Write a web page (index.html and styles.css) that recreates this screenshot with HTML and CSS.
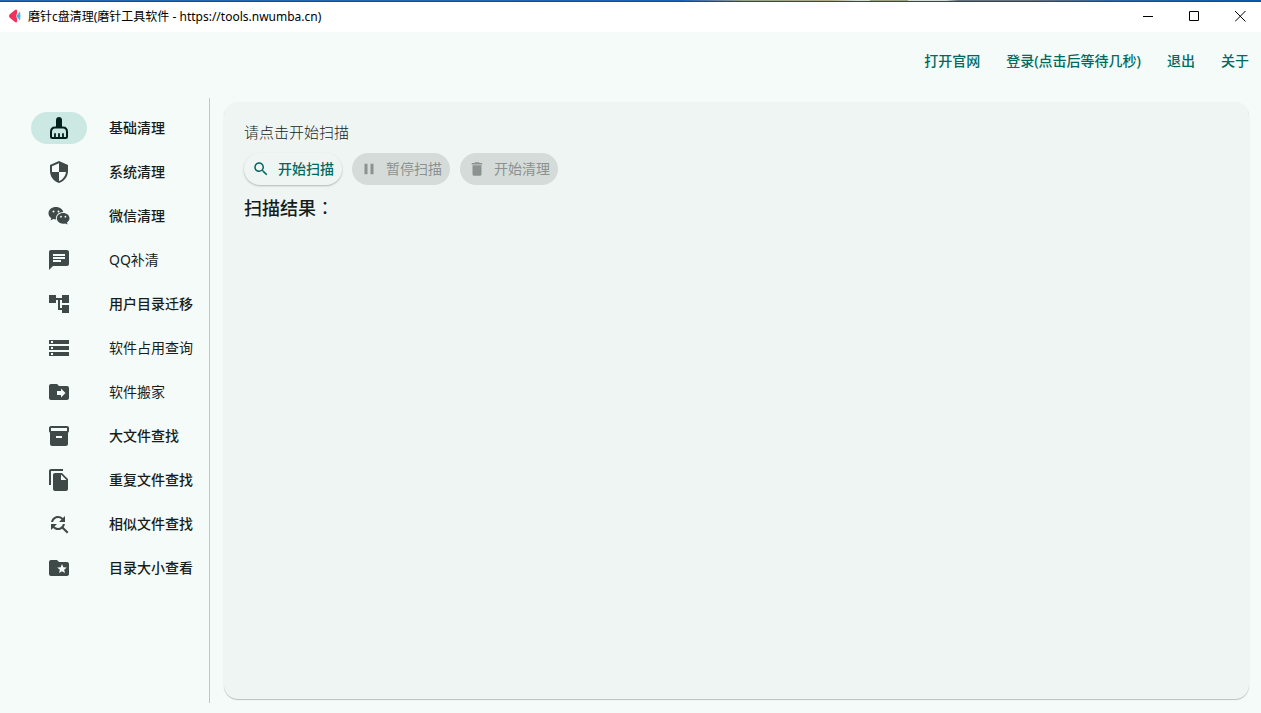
FILE: index.html
```html
<!DOCTYPE html>
<html lang="zh-CN">
<head>
<meta charset="utf-8">
<meta name="viewport" content="width=device-width, initial-scale=1">
<title>磨针c盘清理</title>
<link rel="stylesheet" href="styles.css">
</head>
<body>
<div class="desktop-strip"></div>
<header class="titlebar">
  <svg class="app-logo" viewBox="0 0 12 14"><path fill="#45b5e0" d="M7 7l4-4.500q1 4.500 0 9z"/><path fill="#f0305f" d="M0 7q0-1 1-2l5-4q1.500-1 2 .5v3L7 7l1 2.500v3q-.5 1.500-2 .5L1 9Q0 8 0 7z"/></svg>
  <h1 class="app-title">磨针c盘清理(磨针工具软件 - https://tools.nwumba.cn)</h1>
  <div class="window-controls">
    <button class="window-button" aria-label="最小化"><svg viewBox="0 0 11 11"><path d="M0 5.500h10"/></svg></button>
    <button class="window-button" aria-label="最大化"><svg viewBox="0 0 11 11"><path d="M.5.5h9v9h-9z"/></svg></button>
    <button class="window-button" aria-label="关闭"><svg viewBox="0 0 11 11"><path d="M0 0l10.500 10.500M10.500 0L0 10.500"/></svg></button>
  </div>
</header>
<nav class="top-links">
  <a href="#site">打开官网</a>
  <a href="#login">登录(点击后等待几秒)</a>
  <a href="#logout">退出</a>
  <a href="#about">关于</a>
</nav>
<div class="workspace">
  <nav class="sidebar">
    <a class="nav-item active" href="#basic"><span class="nav-icon"><svg viewBox="0 0 24 24"><path d="M9 11V4c0-4 6-4 6 0v7z"/><path fill="none" stroke="currentColor" stroke-width="2" stroke-linejoin="round" d="M8 11.500h8c2.500 0 4 2 4 4.500v4.500q0 1.500-1.500 1.500h-13Q4 22 4 20.500V16c0-2.500 1.500-4.500 4-4.500z"/><path fill="none" stroke="currentColor" stroke-width="1.800" stroke-linecap="round" d="M8 21v-3M12 21v-3M16 21v-3"/></svg></span>基础清理</a>
    <a class="nav-item" href="#system"><span class="nav-icon"><svg viewBox="0 0 24 24"><path d="M12 1L3 5v6c0 5.550 3.840 10.740 9 12 5.160-1.260 9-6.450 9-12V5l-9-4zm0 10.990h7c-.53 4.120-3.280 7.790-7 8.940V12H5V6.300l7-3.110v8.800z"/></svg></span>系统清理</a>
    <a class="nav-item" href="#wechat"><span class="nav-icon"><svg viewBox="0 0 24 24"><path fill-rule="evenodd" d="M9 3C4.700 3 1.500 5.700 1.500 9.200c0 2 1 3.800 2.800 5L3.600 16.500l2.700-1.400c.9.300 1.800.4 2.700.4-.8-3.800 2.500-7.500 7.300-7.400C15.700 5.200 12.700 3 9 3zM6.500 6.400a1 1 0 110 2 1 1 0 010-2zm5 0a1 1 0 110 2 1 1 0 010-2z"/><path fill-rule="evenodd" d="M16.200 9c-3.700 0-6.400 2.300-6.400 5.300s2.700 5.400 6.400 5.400c.8 0 1.500-.1 2.200-.3l2.200 1.200-.6-2.100c1.600-1.100 2.500-2.500 2.500-4.200 0-3-2.700-5.300-6.300-5.300zm-2.200 2.800a.9.9 0 110 1.800.9.9 0 010-1.800zm4.400 0a.9.9 0 110 1.800.9.900 0 010-1.800z"/></svg></span>微信清理</a>
    <a class="nav-item thin" href="#qq"><span class="nav-icon"><svg viewBox="0 0 24 24"><path d="M20 2H4c-1.100 0-2 .9-2 2v18l4-4h14c1.100 0 2-.9 2-2V4c0-1.100-.9-2-2-2zM6 9h12v2H6V9zm8 5H6v-2h8v2zm4-6H6V6h12v2z"/></svg></span>QQ补清</a>
    <a class="nav-item" href="#migrate"><span class="nav-icon"><svg viewBox="0 0 24 24"><path d="M22 11V3h-7v3H9V3H2v8h7V8h2v10h4v3h7v-8h-7v3h-2V8h2v3z"/></svg></span>用户目录迁移</a>
    <a class="nav-item thin" href="#usage"><span class="nav-icon"><svg viewBox="0 0 24 24"><path d="M2 20h20v-4H2v4zm2-3h2v2H4v-2zM2 4v4h20V4H2zm4 3H4V5h2v2zm-4 7h20v-4H2v4zm2-3h2v2H4v-2z"/></svg></span>软件占用查询</a>
    <a class="nav-item thin" href="#move"><span class="nav-icon"><svg viewBox="0 0 24 24"><path d="M20 6h-8l-2-2H4c-1.100 0-2 .9-2 2v12c0 1.100.9 2 2 2h16c1.100 0 2-.9 2-2V8c0-1.100-.9-2-2-2zm-6 11.500v-2.500h-4v-4h4V8.500l4.500 4.500-4.500 4.500z"/></svg></span>软件搬家</a>
    <a class="nav-item" href="#large"><span class="nav-icon"><svg viewBox="0 0 24 24"><path d="M20 2H4c-1 0-2 .9-2 2v3.010c0 .72.43 1.340 1 1.690V20c0 1.100 1.100 2 2 2h14c.9 0 2-.9 2-2V8.700c.57-.35 1-.97 1-1.690V4c0-1.100-1-2-2-2zm-5 12H9v-2h6v2zm5-7H4V4h16v3z"/></svg></span>大文件查找</a>
    <a class="nav-item" href="#duplicate"><span class="nav-icon"><svg viewBox="0 0 24 24"><path d="M16 1H4c-1.100 0-2 .9-2 2v14h2V3h12V1zm-1 4l6 6v10c0 1.100-.9 2-2 2H8c-1.100 0-2-.9-2-2V7c0-1.100.9-2 2-2h7zm-1 7h5.500L14 6.500V12z"/></svg></span>重复文件查找</a>
    <a class="nav-item" href="#similar"><span class="nav-icon"><svg viewBox="0 0 24 24"><path d="M11 6c1.380 0 2.630.56 3.540 1.460L12 10h6V4l-2.050 2.050C14.680 4.780 12.930 4 11 4c-3.530 0-6.430 2.610-6.920 6H6.100c.46-2.280 2.480-4 4.900-4zm5.640 9.140c.66-.9 1.120-1.970 1.280-3.140H15.900c-.46 2.280-2.480 4-4.900 4-1.380 0-2.630-.56-3.540-1.460L10 12H4v6l2.050-2.050C7.320 17.220 9.070 18 11 18c1.550 0 2.980-.51 4.140-1.360L20 21.490 21.490 20l-4.850-4.860z"/></svg></span>相似文件查找</a>
    <a class="nav-item" href="#size"><span class="nav-icon"><svg viewBox="0 0 24 24"><path d="M20 6h-8l-2-2H4c-1.100 0-2 .9-2 2v12c0 1.100.9 2 2 2h16c1.100 0 2-.9 2-2V8c0-1.100-.9-2-2-2zm-2.060 11L15 15.280 12.060 17l.78-3.330-2.590-2.240 3.410-.29L15 8l1.340 3.140 3.410.29-2.590 2.240.78 3.330z"/></svg></span>目录大小查看</a>
  </nav>
  <main class="panel">
    <p class="status">请点击开始扫描</p>
    <div class="actions">
      <button class="action primary"><svg viewBox="0 0 24 24"><path d="M15.500 14h-.79l-.28-.27C15.410 12.590 16 11.110 16 9.500 16 5.910 13.090 3 9.500 3S3 5.910 3 9.500 5.910 16 9.500 16c1.610 0 3.090-.59 4.230-1.570l.27.28v.79l5 4.990L20.490 19l-4.990-5zm-6 0C7.010 14 5 11.990 5 9.500S7.010 5 9.500 5 14 7.010 14 9.500 11.990 14 9.500 14z"/></svg>开始扫描</button>
      <button class="action" disabled><svg viewBox="0 0 24 24"><path d="M6 19h4V5H6v14zm8-14v14h4V5h-4z"/></svg>暂停扫描</button>
      <button class="action" disabled><svg viewBox="0 0 24 24"><path d="M6 19c0 1.100.9 2 2 2h8c1.100 0 2-.9 2-2V7H6v12zM19 4h-3.500l-1-1h-5l-1 1H5v2h14V4z"/></svg>开始清理</button>
    </div>
    <h2 class="result-title">扫描结果<span class="colon" lang="zh-TW">：</span></h2>
  </main>
</div>
</body>
</html>
```
FILE: styles.css
```css
* {
  box-sizing: border-box;
}

body {
  display: flex;
  flex-direction: column;
  min-height: 100vh;
  margin: 0;
  background: #f5fbf9;
  color: #171d1b;
  font-family: "Noto Sans", "Noto Sans CJK SC", sans-serif;
  font-size: 14px;
  line-height: 20px;
}

a {
  color: inherit;
  text-decoration: none;
}

button {
  border: 0;
  font: inherit;
}

.desktop-strip {
  height: 2px;
  border-bottom: 1px solid #34445c;
  background: linear-gradient(90deg, #2467b1 0 39%, #1b61b8 52%, #1b61b8 54%, #9fa08e 59%, #b1ad8d 66%, #d9d9d9 68% 69%, #a5a28a 69% 72%, #d9d9d9 72% 75%, #68717c 76%, #68717c 82%, #2c66a6 88%, #075baa);
}

.titlebar {
  display: flex;
  align-items: flex-start;
  height: 30px;
  padding-left: 9px;
  background: #fff;
}

.app-logo {
  width: 12px;
  height: 14px;
  margin: 7px 7px 0 0;
}

.app-title {
  margin: 5px 0 0;
  color: #000;
  font-size: 12px;
  font-weight: 400;
}

.window-controls {
  display: flex;
  gap: 4px;
  margin-left: auto;
}

.window-button {
  display: grid;
  place-items: center;
  width: 42px;
  height: 28px;
  padding: 0;
  background: transparent;
}

.window-button svg {
  width: 11px;
  height: 11px;
  fill: none;
  stroke: #000;
}

.top-links {
  display: flex;
  justify-content: flex-end;
  gap: 26px;
  padding: 19px 12px 27px;
  color: #006a60;
  font-weight: 500;
}

.workspace {
  display: flex;
  flex: 1;
  padding-bottom: 10px;
}

.sidebar {
  width: 210px;
  padding-top: 8px;
  border-right: 1px solid #bec9c6;
  font-weight: 500;
}

.nav-item {
  display: flex;
  align-items: center;
  gap: 22px;
  height: 44px;
  padding-left: 31px;
  white-space: nowrap;
}

.thin {
  font-weight: 400;
}

.nav-icon {
  display: grid;
  place-items: center;
  width: 56px;
  height: 32px;
  border-radius: 16px;
  color: #3f4947;
}

.nav-icon svg {
  width: 24px;
  height: 24px;
  fill: currentColor;
}

.active .nav-icon {
  background: #cce8e3;
  color: #05201c;
}

.panel {
  flex: 1;
  margin: 4px 12px 4px 14px;
  padding: 20px;
  border-radius: 14px;
  background: #eff5f3;
  box-shadow: 0 1px 1px #b8c1be;
}

.status {
  margin: 0 0 11px;
  font-size: 15px;
  font-weight: 300;
}

.actions {
  display: flex;
  gap: 10px;
}

.action {
  display: flex;
  align-items: center;
  gap: 8px;
  height: 32px;
  padding: 0 8px;
  border-radius: 16px;
  background: #d5dbd9;
  color: #8b9290;
  font-weight: 400;
}

.action svg {
  width: 18px;
  height: 18px;
  fill: currentColor;
}

.primary {
  background: #eff5f3;
  box-shadow: 0 1px 2px #aeb8b4;
  color: #006a60;
  font-weight: 500;
}

.result-title {
  margin: 9px 0 0;
  font-size: 18px;
  font-weight: 500;
  line-height: 26px;
}

.colon {
  font-family: "Noto Sans CJK TC", sans-serif;
  font-weight: 400;
}
```
